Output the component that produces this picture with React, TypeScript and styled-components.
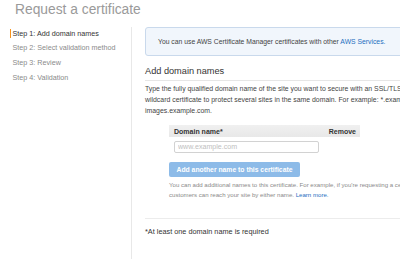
import React from "react";
import styled, { createGlobalStyle } from "styled-components";

const Global = createGlobalStyle`
  html, body { margin: 0; padding: 0; background: #fff; overflow: hidden; }
  body { font-family: "Liberation Sans", Arial, Helvetica, sans-serif; color: #444; }
  * { box-sizing: border-box; }
`;

const Page = styled.div`
  width: 400px;
  height: 262px;
  overflow: hidden;
`;

const Title = styled.h1`
  margin: 0 0 7px 15px;
  font-size: 13.8px;
  line-height: 20px;
  font-weight: normal;
  color: #9a9a9a;
  white-space: nowrap;
`;

const Layout = styled.div`
  display: flex;
  align-items: flex-start;
`;

const Sidebar = styled.nav`
  width: 131px;
  flex: none;
  padding: 1.5px 0 0 10px;
  display: flex;
  flex-direction: column;
  gap: 5.7px;
`;

const NavItem = styled.div<{ $active?: boolean }>`
  font-size: 7.2px;
  line-height: 9px;
  white-space: nowrap;
  padding-left: 1.5px;
  border-left: 1.5px solid ${(p) => (p.$active ? "#f7931e" : "transparent")};
  color: ${(p) => (p.$active ? "#333" : "#8a8a8a")};
`;

const Main = styled.main`
  flex: none;
  width: 460px;
  border-left: 1px solid #e8e8e8;
  padding: 0 0 22.5px 13px;
`;

const InfoBox = styled.div`
  height: 29px;
  display: flex;
  align-items: center;
  padding-left: 12px;
  border: 1px solid #c9d9ec;
  border-radius: 3px;
  background: #f1f6fc;
  font-size: 6.8px;
  color: #444;
  white-space: nowrap;
`;

const Link = styled.a`
  color: #1f6fc0;
  text-decoration: none;
`;

const Heading = styled.h2`
  margin: 9px 0 0;
  padding-bottom: 3px;
  border-bottom: 1px solid #e6e6e6;
  font-size: 9.2px;
  line-height: 12px;
  font-weight: normal;
  color: #333;
`;

const Intro = styled.p`
  margin: 1.5px 0 0;
  font-size: 6.9px;
  line-height: 11px;
  color: #444;
  white-space: nowrap;
`;

const DomainTable = styled.div`
  margin: 9.5px 0 0 24px;
  width: 191px;
`;

const TableHead = styled.div`
  height: 12px;
  display: flex;
  align-items: center;
  justify-content: space-between;
  padding: 0 4px 0 5px;
  background: linear-gradient(#f0f0f0, #e8e8e8);
  font-size: 7px;
  color: #333;
  font-weight: bold;
`;

const InputRow = styled.div`
  padding: 4px 0 0 5px;
`;

const DomainInput = styled.input`
  display: block;
  width: 145px;
  height: 12px;
  margin: 0;
  padding: 0 3px;
  border: 1px solid #d2d2d2;
  border-radius: 2px;
  font-family: inherit;
  font-size: 7.1px;
  color: #444;
  outline: none;
  &::placeholder { color: #c0c0c0; }
`;

const AddButton = styled.button`
  display: block;
  margin: 9px 0 0 24px;
  width: 131px;
  height: 15px;
  padding: 0;
  border: none;
  border-radius: 2px;
  background: #8dbbe8;
  color: #fff;
  font-family: inherit;
  font-weight: bold;
  font-size: 6.8px;
  white-space: nowrap;
`;

const Help = styled.p`
  margin: 3px 0 0 24px;
  font-size: 6.1px;
  line-height: 10px;
  color: #8a8a8a;
  white-space: nowrap;
`;

const Separator = styled.hr`
  margin: 18px 0 0;
  border: none;
  border-top: 1px solid #ececec;
`;

const Required = styled.p`
  margin: 8px 0 0;
  font-size: 7.3px;
  line-height: 9px;
  color: #333;
  white-space: nowrap;
`;

const steps = [
  "Step 1: Add domain names",
  "Step 2: Select validation method",
  "Step 3: Review",
  "Step 4: Validation",
];

export default function App() {
  return (
    <Page>
      <Global />
      <Title>Request a certificate</Title>
      <Layout>
        <Sidebar>
          {steps.map((s, i) => (
            <NavItem key={s} $active={i === 0}>
              {s}
            </NavItem>
          ))}
        </Sidebar>
        <Main>
          <InfoBox>
            <span>
              You can use AWS Certificate Manager certificates with other{" "}
              <Link href="#">AWS Services.</Link>
            </span>
          </InfoBox>
          <Heading>Add domain names</Heading>
          <Intro>
            Type the fully qualified domain name of the site you want to secure with an SSL/TLS
            certificate (for example, www.example.com). Use an asterisk (*) to request a
            <br />
            wildcard certificate to protect several sites in the same domain. For example:
            *.example.com protects www.example.com, site.example.com and
            <br />
            images.example.com.
          </Intro>
          <DomainTable>
            <TableHead>
              <span>Domain name*</span>
              <span>Remove</span>
            </TableHead>
            <InputRow>
              <DomainInput placeholder="www.example.com" />
            </InputRow>
          </DomainTable>
          <AddButton>Add another name to this certificate</AddButton>
          <Help>
            You can add additional names to this certificate. For example, if you're requesting a
            certificate for "www.example.com", you might want to add the name "example.com" so that
            <br />
            customers can reach your site by either name. <Link href="#">Learn more.</Link>
          </Help>
          <Separator />
          <Required>*At least one domain name is required</Required>
        </Main>
      </Layout>
    </Page>
  );
}
